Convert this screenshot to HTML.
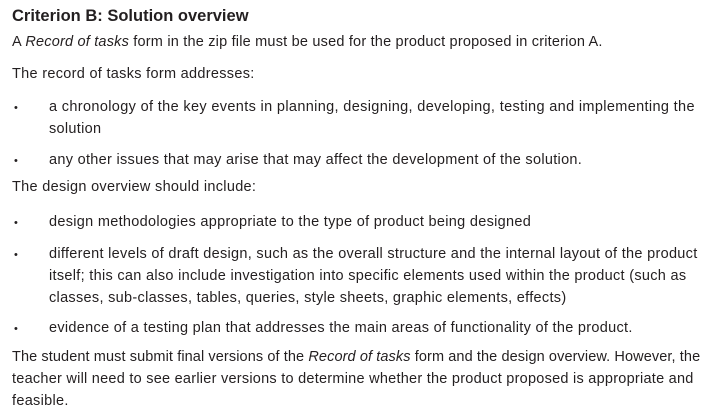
<!DOCTYPE html>
<html><head><meta charset="utf-8"><style>
html,body{margin:0;padding:0;background:#fff;width:718px;height:419px;overflow:hidden}
body{font-family:"Liberation Sans",sans-serif;font-size:14.5px;letter-spacing:0.3px;color:#231f20;position:relative}
.l{position:absolute;white-space:nowrap;line-height:16px}
.t{font-weight:bold;font-size:16.5px;letter-spacing:0;left:12px;top:6px;line-height:20px}
.b{position:absolute;left:14px;font-size:11px;line-height:16px;top:0}
</style></head><body>
<div class="l t">Criterion B: Solution overview</div>
<div class="l" style="left:12px;top:34px;letter-spacing:0.2px">A <i>Record of tasks</i> form in the zip file must be used for the product proposed in criterion A.</div>
<div class="l" style="left:12px;top:66px">The record of tasks form addresses:</div>
<div class="b" style="top:100px">•</div>
<div class="l" style="left:49px;top:99px;letter-spacing:0.35px">a chronology of the key events in planning, designing, developing, testing and implementing the</div>
<div class="l" style="left:49px;top:121px">solution</div>
<div class="b" style="top:153px">•</div>
<div class="l" style="left:49px;top:152px">any other issues that may arise that may affect the development of the solution.</div>
<div class="l" style="left:12px;top:179px">The design overview should include:</div>
<div class="b" style="top:215px">•</div>
<div class="l" style="left:49px;top:214px">design methodologies appropriate to the type of product being designed</div>
<div class="b" style="top:247px">•</div>
<div class="l" style="left:49px;top:246px">different levels of draft design, such as the overall structure and the internal layout of the product</div>
<div class="l" style="left:49px;top:268px">itself; this can also include investigation into specific elements used within the product (such as</div>
<div class="l" style="left:49px;top:290px">classes, sub-classes, tables, queries, style sheets, graphic elements, effects)</div>
<div class="b" style="top:321px">•</div>
<div class="l" style="left:49px;top:320px">evidence of a testing plan that addresses the main areas of functionality of the product.</div>
<div class="l" style="left:12px;top:349px;letter-spacing:0.1px">The student must submit final versions of the <i>Record of tasks</i> form and the design overview. However, the</div>
<div class="l" style="left:12px;top:371px;letter-spacing:0.25px">teacher will need to see earlier versions to determine whether the product proposed is appropriate and</div>
<div class="l" style="left:12px;top:393px">feasible.</div>
</body></html>
